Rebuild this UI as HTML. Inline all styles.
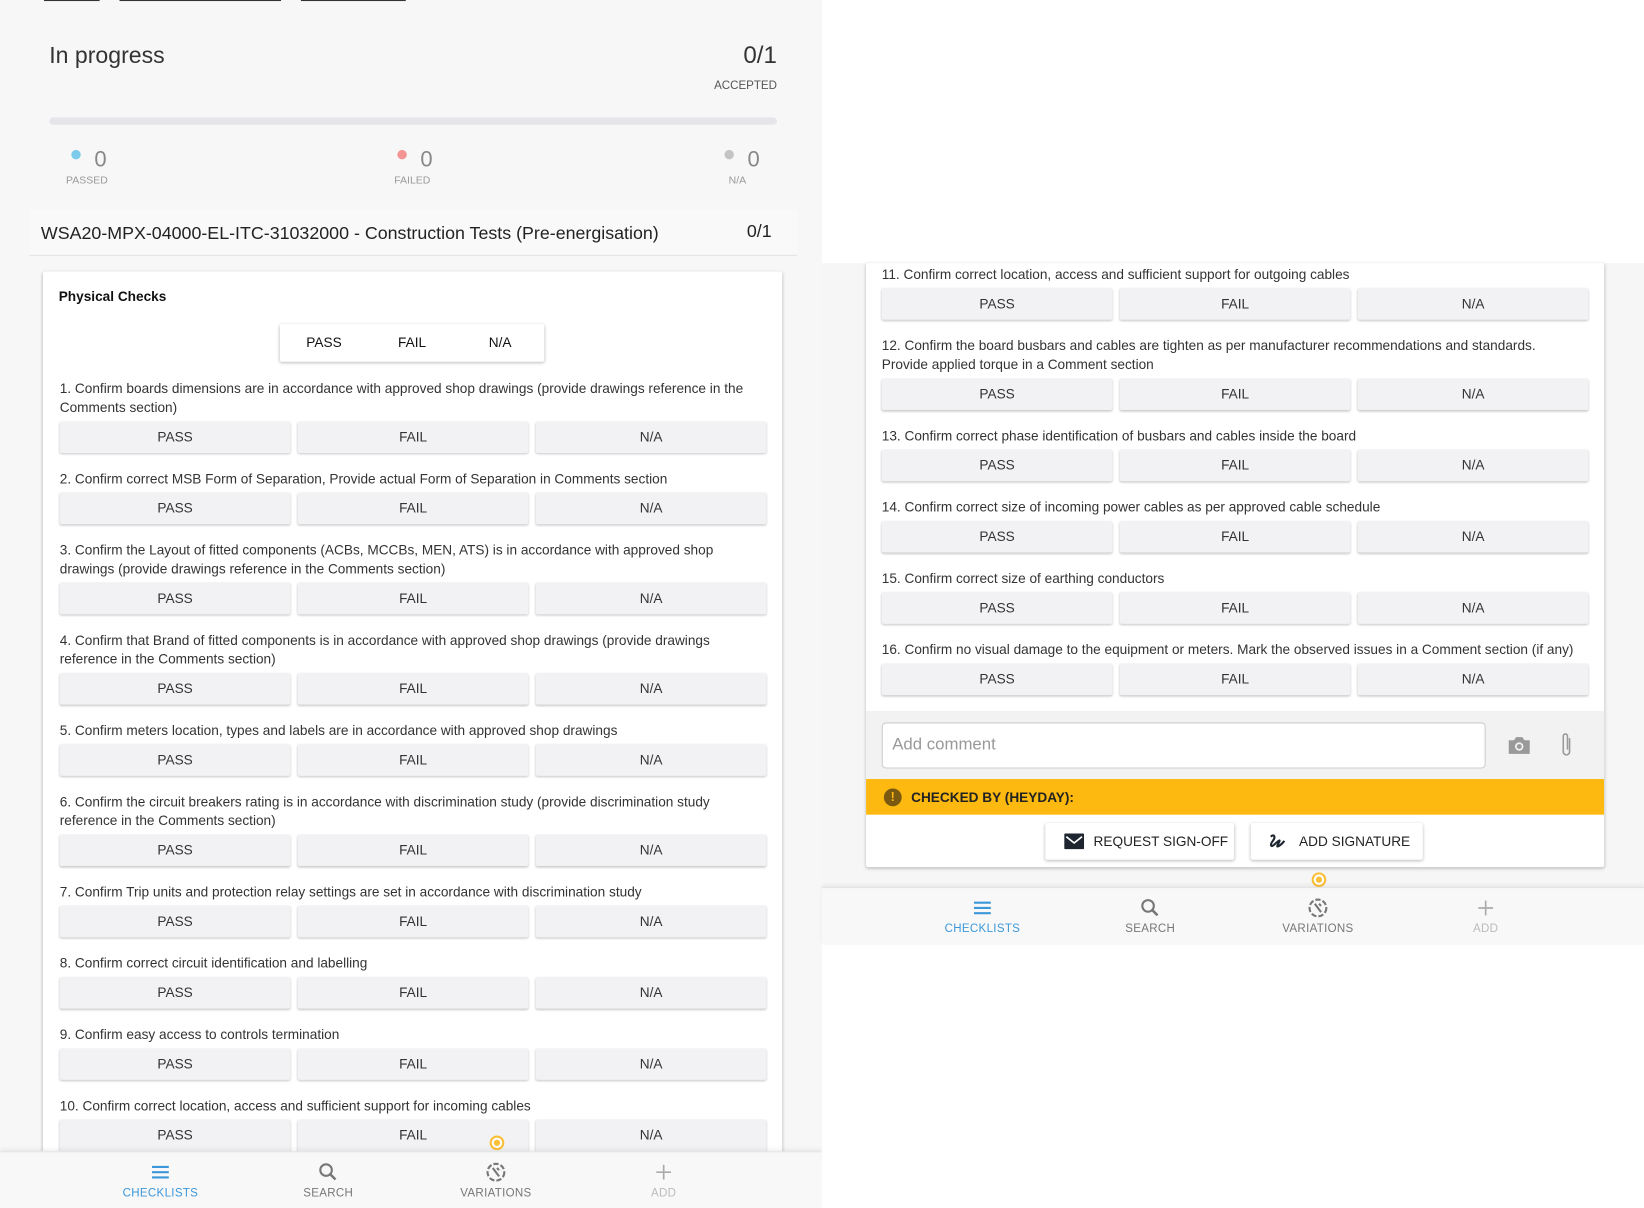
<!DOCTYPE html>
<html><head><meta charset="utf-8"><style>
html,body{margin:0;padding:0;width:1644px;height:1208px;overflow:hidden;background:#fff;font-family:"Liberation Sans",sans-serif;}
#w{position:absolute;left:0;top:0;width:1568px;height:1152px;transform:scale(1.04847);transform-origin:0 0;}
.abs{position:absolute;}
.left{left:0;top:0;width:784px;height:1152px;background:#f7f7f7;overflow:hidden;}
.rightbg{left:784px;top:251px;width:784px;height:649px;background:#f6f6f6;}
.card{background:#fff;box-shadow:0 1px 3px rgba(0,0,0,.25);border-radius:2px;}
.q{font-size:13px;line-height:18px;color:#333;}
.row{display:flex;gap:7px;margin-top:4px;margin-bottom:16px;}
.row div{width:220px;height:30px;line-height:30px;text-align:center;font-size:13px;color:#333;background:#f2f2f4;border-radius:2px;box-shadow:0 1px 2px rgba(0,0,0,.22);}
.nav{height:54px;background:#f8f8f8;border-top:1px solid #e4e4e4;box-shadow:0 -2px 4px rgba(0,0,0,.06);}
.ni{position:absolute;width:160px;text-align:center;font-size:11px;color:#777;top:33px;letter-spacing:.3px;}
.ni svg{position:absolute;left:70px;top:-24px;}
.dot{width:9px;height:9px;border-radius:50%;}
</style></head><body><div id="w">
<div class="abs left">
  <div class="abs" style="left:42px;top:0;width:53px;height:1px;background:#333"></div>
  <div class="abs" style="left:114px;top:0;width:154px;height:1px;background:#333"></div>
  <div class="abs" style="left:287px;top:0;width:100px;height:1px;background:#333"></div>
  <div class="abs" style="left:47px;top:40px;font-size:22px;color:#333">In progress</div>
  <div class="abs" style="left:700px;top:39px;width:41px;text-align:right;font-size:23px;color:#333">0/1</div>
  <div class="abs" style="left:660px;top:76px;width:81px;text-align:right;font-size:11px;color:#555">ACCEPTED</div>
  <div class="abs" style="left:47px;top:112px;width:694px;height:7px;background:#e5e5ea;border-radius:4px"></div>
  <div class="abs dot" style="left:68px;top:143px;background:#7ccbea"></div>
  <div class="abs" style="left:90px;top:141px;font-size:21px;color:#888">0</div>
  <div class="abs" style="left:63px;top:167px;font-size:10px;color:#999">PASSED</div>
  <div class="abs dot" style="left:379px;top:143px;background:#f49494"></div>
  <div class="abs" style="left:401px;top:141px;font-size:21px;color:#888">0</div>
  <div class="abs" style="left:376px;top:167px;font-size:10px;color:#999">FAILED</div>
  <div class="abs dot" style="left:691px;top:143px;background:#c4c4c4"></div>
  <div class="abs" style="left:713px;top:141px;font-size:21px;color:#888">0</div>
  <div class="abs" style="left:695px;top:167px;font-size:10px;color:#999">N/A</div>
  <div class="abs" style="left:28px;top:200px;width:732px;height:43px;background:#f9f9fa;border-bottom:1px solid #e2e2e2"></div>
  <div class="abs" style="left:39px;top:213px;font-size:17px;color:#222">WSA20-MPX-04000-EL-ITC-31032000 - Construction Tests (Pre-energisation)</div>
  <div class="abs" style="left:700px;top:211px;width:36px;text-align:right;font-size:17px;color:#222">0/1</div>
  <div class="abs card" style="left:41px;top:259px;width:705px;height:900px">
    <div class="abs" style="left:15px;top:16px;font-size:13px;font-weight:bold;color:#111">Physical Checks</div>
    <div class="abs card" style="left:226px;top:50px;width:252px;height:36px;display:flex;font-size:13px;color:#111">
      <div style="width:84px;text-align:center;line-height:36px">PASS</div><div style="width:84px;text-align:center;line-height:36px">FAIL</div><div style="width:84px;text-align:center;line-height:36px">N/A</div></div>
    <div class="abs" style="left:16px;top:103px;width:674px">
      <div class="q">1. Confirm boards dimensions are in accordance with approved shop drawings (provide drawings reference in the Comments section)</div>
      <div class="row"><div>PASS</div><div>FAIL</div><div>N/A</div></div>
      <div class="q">2. Confirm correct MSB Form of Separation, Provide actual Form of Separation in Comments section</div>
      <div class="row"><div>PASS</div><div>FAIL</div><div>N/A</div></div>
      <div class="q">3. Confirm the Layout of fitted components (ACBs, MCCBs, MEN, ATS) is in accordance with approved shop<br>drawings (provide drawings reference in the Comments section)</div>
      <div class="row"><div>PASS</div><div>FAIL</div><div>N/A</div></div>
      <div class="q">4. Confirm that Brand of fitted components is in accordance with approved shop drawings (provide drawings<br>reference in the Comments section)</div>
      <div class="row"><div>PASS</div><div>FAIL</div><div>N/A</div></div>
      <div class="q">5. Confirm meters location, types and labels are in accordance with approved shop drawings</div>
      <div class="row"><div>PASS</div><div>FAIL</div><div>N/A</div></div>
      <div class="q">6. Confirm the circuit breakers rating is in accordance with discrimination study (provide discrimination study<br>reference in the Comments section)</div>
      <div class="row"><div>PASS</div><div>FAIL</div><div>N/A</div></div>
      <div class="q">7. Confirm Trip units and protection relay settings are set in accordance with discrimination study</div>
      <div class="row"><div>PASS</div><div>FAIL</div><div>N/A</div></div>
      <div class="q">8. Confirm correct circuit identification and labelling</div>
      <div class="row"><div>PASS</div><div>FAIL</div><div>N/A</div></div>
      <div class="q">9. Confirm easy access to controls termination</div>
      <div class="row"><div>PASS</div><div>FAIL</div><div>N/A</div></div>
      <div class="q">10. Confirm correct location, access and sufficient support for incoming cables</div>
      <div class="row"><div>PASS</div><div>FAIL</div><div>N/A</div></div>
    </div>
  </div>
  <div class="abs" style="left:467px;top:1083px;width:10px;height:10px;border:2px solid #fbbf3a;border-radius:50%;background:#fff"><div style="margin:2px;width:6px;height:6px;border-radius:50%;background:#fbbf3a"></div></div>
  <div class="abs nav" style="left:0;top:1098px;width:784px">
    <div class="ni" style="left:73px;color:#3c97d9"><svg width="20" height="20" viewBox="0 0 20 20"><path d="M2 5h16M2 10h16M2 15h16" stroke="#3c97d9" stroke-width="2"/></svg>CHECKLISTS</div>
    <div class="ni" style="left:233px"><svg width="20" height="20" viewBox="0 0 20 20"><circle cx="8" cy="8" r="5.5" fill="none" stroke="#777" stroke-width="2"/><path d="M12 12l5 5" stroke="#777" stroke-width="2.4"/></svg>SEARCH</div>
    <div class="ni" style="left:393px"><svg width="20" height="20" viewBox="0 0 20 20"><circle cx="10" cy="10" r="8" fill="none" stroke="#777" stroke-width="2" stroke-dasharray="5 2"/><path d="M7 6l6 8M11 6l2 2" stroke="#777" stroke-width="2"/></svg>VARIATIONS</div>
    <div class="ni" style="left:553px;color:#bbb"><svg width="20" height="20" viewBox="0 0 20 20"><path d="M10 3v14M3 10h14" stroke="#aaa" stroke-width="1.6"/></svg>ADD</div>
  </div>
</div>
<div class="abs rightbg"></div>
<div class="abs card" style="left:826px;top:251px;width:704px;height:576px;overflow:hidden;border-radius:0 0 2px 2px">
  <div class="abs" style="left:15px;top:2px;width:680px">
    <div class="q">11. Confirm correct location, access and sufficient support for outgoing cables</div>
    <div class="row"><div>PASS</div><div>FAIL</div><div>N/A</div></div>
    <div class="q">12. Confirm the board busbars and cables are tighten as per manufacturer recommendations and standards.<br>Provide applied torque in a Comment section</div>
    <div class="row"><div>PASS</div><div>FAIL</div><div>N/A</div></div>
    <div class="q">13. Confirm correct phase identification of busbars and cables inside the board</div>
    <div class="row"><div>PASS</div><div>FAIL</div><div>N/A</div></div>
    <div class="q">14. Confirm correct size of incoming power cables as per approved cable schedule</div>
    <div class="row"><div>PASS</div><div>FAIL</div><div>N/A</div></div>
    <div class="q">15. Confirm correct size of earthing conductors</div>
    <div class="row"><div>PASS</div><div>FAIL</div><div>N/A</div></div>
    <div class="q" style="white-space:nowrap">16. Confirm no visual damage to the equipment or meters. Mark the observed issues in a Comment section (if any)</div>
    <div class="row"><div>PASS</div><div>FAIL</div><div>N/A</div></div>
  </div>
  <div class="abs" style="left:0;top:427px;width:704px;height:65px;background:#f2f2f2"></div>
  <div class="abs" style="left:15px;top:438px;width:574px;height:42px;background:#fff;border:1px solid #ccc;border-radius:4px;font-size:16px;color:#999;line-height:42px;text-indent:9px">Add comment</div>
  <svg class="abs" style="left:611px;top:450px" width="24" height="20" viewBox="0 0 24 20"><path d="M2 5h5l2-3h6l2 3h5v13H2z" fill="#999"/><circle cx="12" cy="11" r="4" fill="#f2f2f2"/><circle cx="12" cy="11" r="2.3" fill="#999"/></svg>
  <svg class="abs" style="left:660px;top:447px" width="16" height="26" viewBox="0 0 16 26"><path d="M11 6v13a3 3 0 0 1-6 0V4a2 2 0 0 1 4 0v13" fill="none" stroke="#999" stroke-width="1.5"/></svg>
  <div class="abs" style="left:0;top:492px;width:704px;height:34px;background:#fdb90f"></div>
  <div class="abs" style="left:17px;top:501px;width:17px;height:17px;border-radius:50%;background:#7a5a10;color:#fdb90f;font-size:12px;font-weight:bold;text-align:center;line-height:17px">!</div>
  <div class="abs" style="left:43px;top:502px;font-size:13px;color:#222;font-weight:bold">CHECKED BY (HEYDAY):</div>
  <div class="abs card" style="left:171px;top:534px;width:180px;height:35px;font-size:13px;color:#222;line-height:35px"><svg style="position:absolute;left:18px;top:10px" width="19" height="15" viewBox="0 0 19 15"><rect width="19" height="15" rx="1" fill="#1d2630"/><path d="M2 3l7.5 6L17 3" fill="none" stroke="#fff" stroke-width="1.6"/></svg><span style="position:absolute;left:46px">REQUEST SIGN-OFF</span></div>
  <div class="abs card" style="left:367px;top:534px;width:164px;height:35px;font-size:13px;color:#222;line-height:35px"><svg style="position:absolute;left:16px;top:9px" width="20" height="18" viewBox="0 0 20 18"><path d="M3 4c3-3 5 0 2 4s-2 7 2 3 6-5 3 0 3 1 6-3" fill="none" stroke="#1d2630" stroke-width="2"/></svg><span style="position:absolute;left:46px">ADD SIGNATURE</span></div>
</div>
<div class="abs" style="left:1251px;top:832px;width:10px;height:10px;border:2px solid #fbbf3a;border-radius:50%;background:#fff"><div style="margin:2px;width:6px;height:6px;border-radius:50%;background:#fbbf3a"></div></div>
<div class="abs nav" style="left:784px;top:846px;width:784px">
  <div class="ni" style="left:73px;color:#3c97d9"><svg width="20" height="20" viewBox="0 0 20 20"><path d="M2 5h16M2 10h16M2 15h16" stroke="#3c97d9" stroke-width="2"/></svg>CHECKLISTS</div>
  <div class="ni" style="left:233px"><svg width="20" height="20" viewBox="0 0 20 20"><circle cx="8" cy="8" r="5.5" fill="none" stroke="#777" stroke-width="2"/><path d="M12 12l5 5" stroke="#777" stroke-width="2.4"/></svg>SEARCH</div>
  <div class="ni" style="left:393px"><svg width="20" height="20" viewBox="0 0 20 20"><circle cx="10" cy="10" r="8" fill="none" stroke="#777" stroke-width="2" stroke-dasharray="5 2"/><path d="M7 6l6 8M11 6l2 2" stroke="#777" stroke-width="2"/></svg>VARIATIONS</div>
  <div class="ni" style="left:553px;color:#bbb"><svg width="20" height="20" viewBox="0 0 20 20"><path d="M10 3v14M3 10h14" stroke="#aaa" stroke-width="1.6"/></svg>ADD</div>
</div>
</div></body></html>
